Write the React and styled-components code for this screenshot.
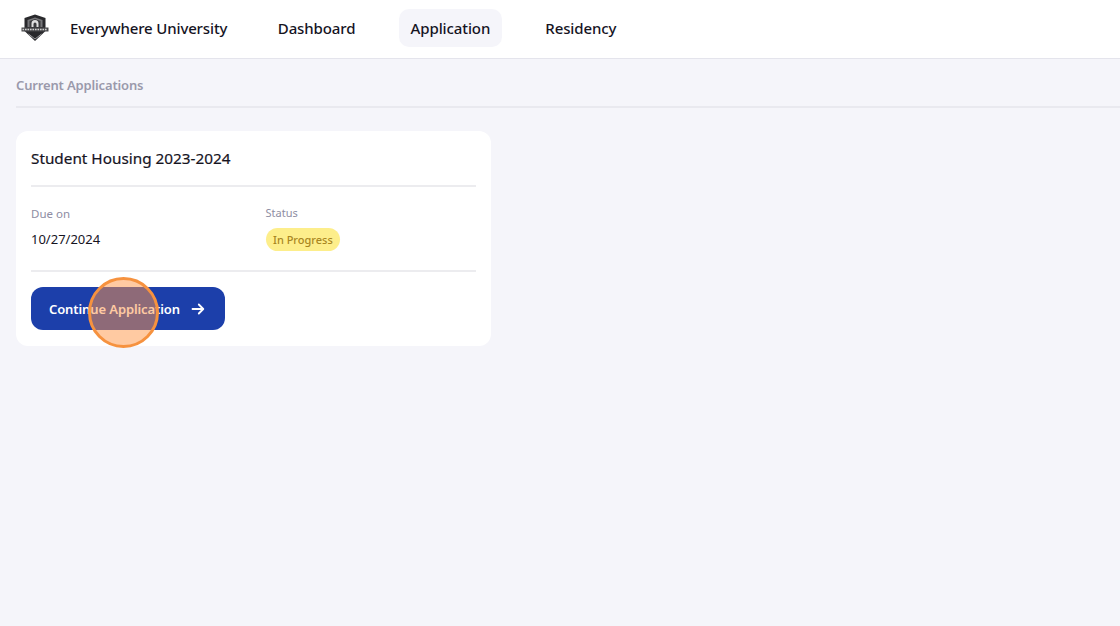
import React from 'react'
import styled, { createGlobalStyle } from 'styled-components'

const Global = createGlobalStyle`
  html, body {
    margin: 0;
    padding: 0;
    height: 100%;
    background: #f5f5fa;
    font-family: "Noto Sans", "Open Sans", sans-serif;
    color: #16141f;
  }
`

const Page = styled.div`
  min-height: 626px;
  background: #f5f5fa;
  overflow: hidden;
`

const Header = styled.header`
  height: 56px;
  background: #fff;
  border-bottom: 1px solid #e4e4ec;
  display: flex;
  align-items: center;
  padding: 0 0 2px 21px;
`

const Logo = styled.svg`
  width: 28px;
  height: 28px;
  flex: none;
`

const Brand = styled.div`
  margin-left: 21px;
  margin-right: 38.5px;
  font-size: 15px;
  font-weight: 500;
  letter-spacing: -0.14px;
  white-space: nowrap;
`

const Nav = styled.nav`
  display: flex;
  align-items: center;
  gap: 31px;
`

const NavItem = styled.a`
  height: 38px;
  padding: 0 12px;
  display: flex;
  align-items: center;
  border-radius: 10px;
  font-size: 15px;
  font-weight: 500;
  letter-spacing: -0.1px;
  background: ${props => props.$active ? '#f5f5fa' : 'transparent'};
`

const Main = styled.main`
  padding: 0 0 0 16px;
`

const SectionTitle = styled.div`
  height: 47px;
  line-height: 52px;
  border-bottom: 2px solid #e9e9ef;
  font-size: 13px;
  font-weight: 600;
  letter-spacing: -0.15px;
  color: #9a99ab;
`

const Card = styled.section`
  position: relative;
  margin-top: 23px;
  width: 475px;
  height: 215px;
  box-sizing: border-box;
  padding: 0 15px;
  background: #fff;
  border-radius: 12px;
`

const CardTitle = styled.h2`
  margin: 0;
  height: 54px;
  line-height: 54px;
  border-bottom: 2px solid #ececef;
  font-size: 15.3px;
  font-weight: 400;
  -webkit-text-stroke: 0.2px #16141f;
`

const Details = styled.div`
  height: 83px;
  display: grid;
  grid-template-columns: 234.5px 1fr;
  border-bottom: 2px solid #ececef;
`

const Field = styled.div`
  display: flex;
  flex-direction: column;
  align-items: flex-start;
  padding-top: ${props => props.$top}px;
`

const Label = styled.div`
  font-size: ${props => props.$size}px;
  line-height: 16px;
  color: #8e8da3;
`

const Value = styled.div`
  margin-top: 9px;
  font-size: 13px;
  line-height: 17px;
`

const Badge = styled.span`
  margin-top: 7px;
  height: 23px;
  width: 74px;
  box-sizing: border-box;
  padding-left: 7.5px;
  display: flex;
  align-items: center;
  border-radius: 12px;
  background: #fdee8b;
  color: #a9861f;
  font-size: 11px;
  font-weight: 500;
  white-space: nowrap;
`

const Button = styled.button`
  margin-top: 15px;
  width: 194px;
  height: 43px;
  padding: 0 0 0 18px;
  display: flex;
  align-items: center;
  gap: 11px;
  border: 0;
  border-radius: 12px;
  background: #1c3faa;
  color: #fff;
  font-family: inherit;
  font-size: 13px;
  font-weight: 600;
  letter-spacing: -0.1px;
  white-space: nowrap;
`

const ClickMark = styled.div`
  position: absolute;
  left: 72px;
  top: 146px;
  width: 71px;
  height: 71px;
  box-sizing: border-box;
  border-radius: 50%;
  border: 3px solid #f6923f;
  background: rgba(255, 150, 70, 0.5);
`

function ShieldLogo() {
  return (
    <Logo viewBox="0 0 28 28">
      <path d="M3.5 4 L14 0.5 L24.5 4 L24.5 17 L14 27 L3.5 17 Z" fill="#29292c" />
      <path d="M6.5 6 L14 3.4 L21.5 6 L21.5 13 L6.5 13 Z" fill="#77777a" />
      <path d="M8.5 7 L14 5 L19.5 7 L19.5 13 L8.5 13 Z" fill="#3a3a3d" />
      <path d="M10.5 13 V9.5 a3.5 3.5 0 0 1 7 0 V13 H15.5 V10 a1.5 1.5 0 0 0 -3 0 V13 Z" fill="#dedede" />
      <rect x="0.5" y="13.5" width="27" height="4" fill="#48484b" />
      <path d="M1.5 15.5 H26.5" stroke="#d0d0d0" strokeWidth="1.6" strokeDasharray="1.6 0.9" />
      <path d="M7.5 20 L14 25 L20.5 20" fill="none" stroke="#9a9a9d" strokeWidth="1" />
    </Logo>
  )
}

function ArrowIcon() {
  return (
    <svg width="14" height="14" viewBox="0 0 14 14" fill="none" stroke="#fff" strokeWidth="1.8" strokeLinecap="round" strokeLinejoin="round">
      <path d="M1.5 7 H12 M7.8 2.5 L12.3 7 L7.8 11.5" />
    </svg>
  )
}

export default function App() {
  return (
    <Page>
      <Global />
      <Header>
        <ShieldLogo />
        <Brand>Everywhere University</Brand>
        <Nav>
          <NavItem>Dashboard</NavItem>
          <NavItem $active>Application</NavItem>
          <NavItem>Residency</NavItem>
        </Nav>
      </Header>
      <Main>
        <SectionTitle>Current Applications</SectionTitle>
        <Card>
          <CardTitle>Student Housing 2023-2024</CardTitle>
          <Details>
            <Field $top={19}>
              <Label $size={11.5}>Due on</Label>
              <Value>10/27/2024</Value>
            </Field>
            <Field $top={18}>
              <Label $size={11}>Status</Label>
              <Badge>In Progress</Badge>
            </Field>
          </Details>
          <Button>
            Continue Application
            <ArrowIcon />
          </Button>
          <ClickMark />
        </Card>
      </Main>
    </Page>
  )
}
